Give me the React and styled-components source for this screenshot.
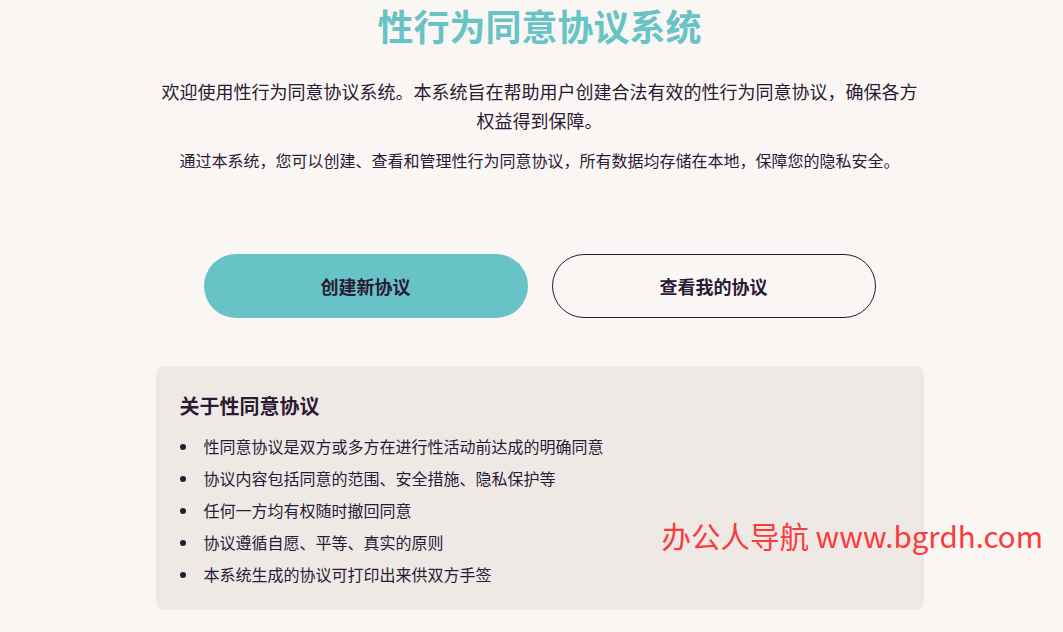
import React from "react";
import styled, { createGlobalStyle } from "styled-components";

const GlobalStyle = createGlobalStyle`
  body {
    margin: 0;
    padding-left: 16px;
    background: #faf6f3;
    font-family: "Noto Sans CJK SC", "Noto Sans", sans-serif;
    color: #2a1a35;
  }
`;

// page column
const Page = styled.main`
  position: relative;
  max-width: 768px;
  margin: 0 auto;
  padding-top: 2px;
  display: flex;
  flex-direction: column;
  align-items: center;
`;

const Title = styled.h1`
  margin: 0;
  font-size: 36px;
  line-height: 46px;
  font-weight: 700;
  color: #67c3c6;
`;

const Intro = styled.p`
  margin: 29px 0 0;
  max-width: 768px;
  font-size: 18px;
  line-height: 29px;
  text-align: center;
`;

const Note = styled.p`
  margin: 13px 0 0;
  font-size: 16px;
  line-height: 24px;
  text-align: center;
`;

const Actions = styled.div`
  display: flex;
  gap: 24px;
  margin-top: 82px;
`;

const Button = styled.button`
  width: 324px;
  height: 64px;
  border-radius: 32px;
  font-family: inherit;
  font-size: 18px;
  font-weight: 700;
  color: #2a1a35;
  cursor: pointer;
  background: ${(p) => (p.$primary ? "#67c3c6" : "transparent")};
  border: ${(p) => (p.$primary ? "none" : "1px solid #2a1a35")};
`;

const InfoCard = styled.section`
  align-self: stretch;
  margin-top: 48px;
  padding: 24px 24px 20px;
  background: #efe9e5;
  border-radius: 8px;
`;

const CardTitle = styled.h2`
  margin: 0;
  font-size: 20px;
  line-height: 32px;
  font-weight: 700;
`;

const List = styled.ul`
  margin: 8px 0 0;
  padding: 0;
  list-style: none;
`;

// bullet drawn by hand to sit where the original one does
const Item = styled.li`
  position: relative;
  padding-left: 24px;
  font-size: 16px;
  line-height: 32px;

  &::before {
    content: "";
    position: absolute;
    left: 0;
    top: 14px;
    width: 6px;
    height: 6px;
    border-radius: 50%;
    background: #2a1a35;
  }
`;

const Watermark = styled.div`
  position: absolute;
  left: 506px;
  top: 514px;
  font-family: "Noto Sans CJK SC", "Noto Sans", sans-serif;
  font-size: 29.5px;
  color: #fa3a3c;
  white-space: nowrap;
`;

const points = [
  "性同意协议是双方或多方在进行性活动前达成的明确同意",
  "协议内容包括同意的范围、安全措施、隐私保护等",
  "任何一方均有权随时撤回同意",
  "协议遵循自愿、平等、真实的原则",
  "本系统生成的协议可打印出来供双方手签",
];

const App = () => {
  return (
    <>
      <GlobalStyle />
      <Page>
        <Title>性行为同意协议系统</Title>
        <Intro>
          欢迎使用性行为同意协议系统。本系统旨在帮助用户创建合法有效的性行为同意协议，确保各方权益得到保障。
        </Intro>
        <Note>
          通过本系统，您可以创建、查看和管理性行为同意协议，所有数据均存储在本地，保障您的隐私安全。
        </Note>
        <Actions>
          <Button $primary>创建新协议</Button>
          <Button>查看我的协议</Button>
        </Actions>
        <InfoCard>
          <CardTitle>关于性同意协议</CardTitle>
          <List>
            {points.map((text) => (
              <Item key={text}>{text}</Item>
            ))}
          </List>
        </InfoCard>
        <Watermark>办公人导航 www.bgrdh.com</Watermark>
      </Page>
    </>
  );
};

export default App;
